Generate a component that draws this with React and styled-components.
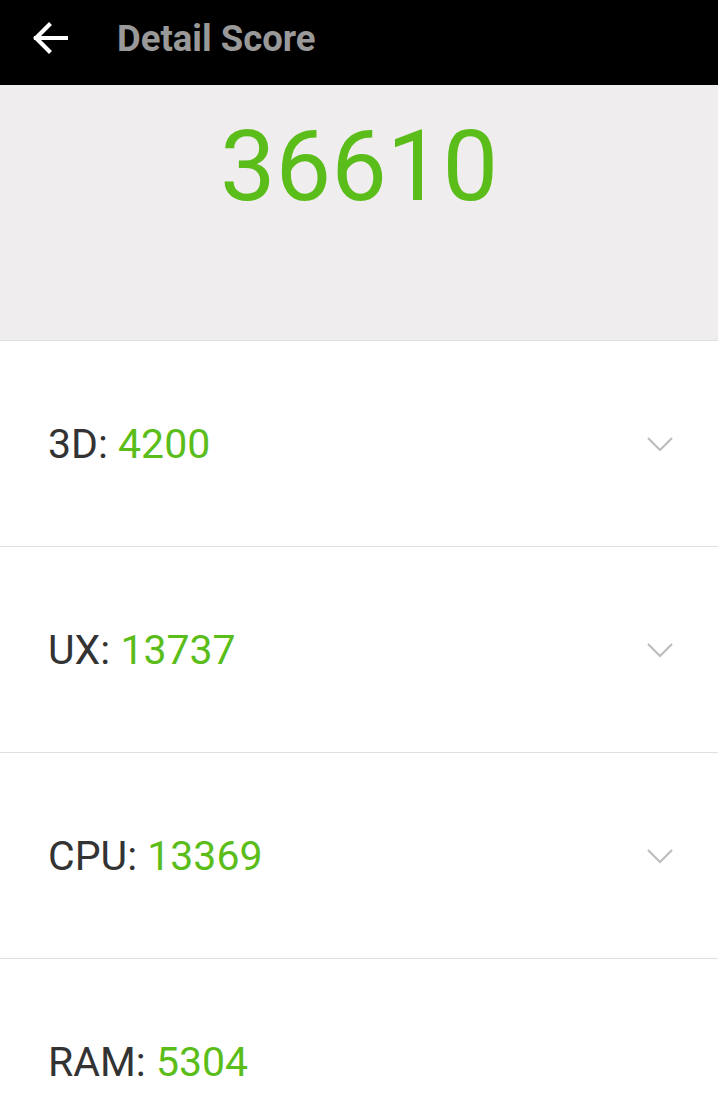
import React from "react";
import styled, { createGlobalStyle } from "styled-components";

const Global = createGlobalStyle`
  html, body { margin: 0; padding: 0; background: #fff; }
  body { font-family: Roboto, "Noto Sans", sans-serif; }
`;

const Page = styled.div`
  width: 718px;
  height: 1106px;
  overflow: hidden;
  display: flex;
  flex-direction: column;
`;

const TopBar = styled.header`
  height: 85px;
  flex-shrink: 0;
  background: #000;
  display: flex;
  align-items: center;
  padding: 0 0 9px 32px;
  box-sizing: border-box;
`;

const BackButton = styled.div`
  width: 36px;
  height: 36px;
  display: flex;
  align-items: center;
  justify-content: center;
`;

const Title = styled.h1`
  margin: 0 0 0 49px;
  font-size: 36.5px;
  font-weight: 700;
  color: #999;
`;

const Hero = styled.section`
  height: 256px;
  flex-shrink: 0;
  background: #efeded;
  border-bottom: 1px solid #dedede;
  display: flex;
  justify-content: center;
  align-items: flex-start;
  padding-top: 32px;
  box-sizing: border-box;
`;

const TotalScore = styled.div`
  font-size: 99px;
  line-height: 1;
  color: #5bbd19;
  font-weight: 400;
`;

const Row = styled.div`
  height: 206px;
  flex-shrink: 0;
  border-bottom: 1px solid #e0e0e0;
  display: flex;
  align-items: center;
  justify-content: space-between;
  padding: 0 44px 0 48px;
  box-sizing: border-box;
`;

const Label = styled.div`
  font-size: 41px;
  color: #333;
`;

const Value = styled.span`
  color: #5bbd19;
`;

const Chevron = () => (
  <svg width="28" height="18" viewBox="0 0 28 18">
    <path d="M2 3 L14 15 L26 3" fill="none" stroke="#bdbdbd" strokeWidth="2.2" />
  </svg>
);

const items = [
  { name: "3D", value: "4200", more: true },
  { name: "UX", value: "13737", more: true },
  { name: "CPU", value: "13369", more: true },
  { name: "RAM", value: "5304", more: false },
];

export default function App() {
  return (
    <Page>
      <Global />
      <TopBar>
        <BackButton>
          <svg width="36" height="32" viewBox="0 0 36 32">
            <path d="M34 16 H4 M17 3 L4 16 L17 29" fill="none" stroke="#fff" strokeWidth="4.2" strokeLinecap="square" />
          </svg>
        </BackButton>
        <Title>Detail Score</Title>
      </TopBar>
      <Hero>
        <TotalScore>36610</TotalScore>
      </Hero>
      {items.map((it) => (
        <Row key={it.name}>
          <Label>
            {it.name}: <Value>{it.value}</Value>
          </Label>
          {it.more && <Chevron />}
        </Row>
      ))}
    </Page>
  );
}
